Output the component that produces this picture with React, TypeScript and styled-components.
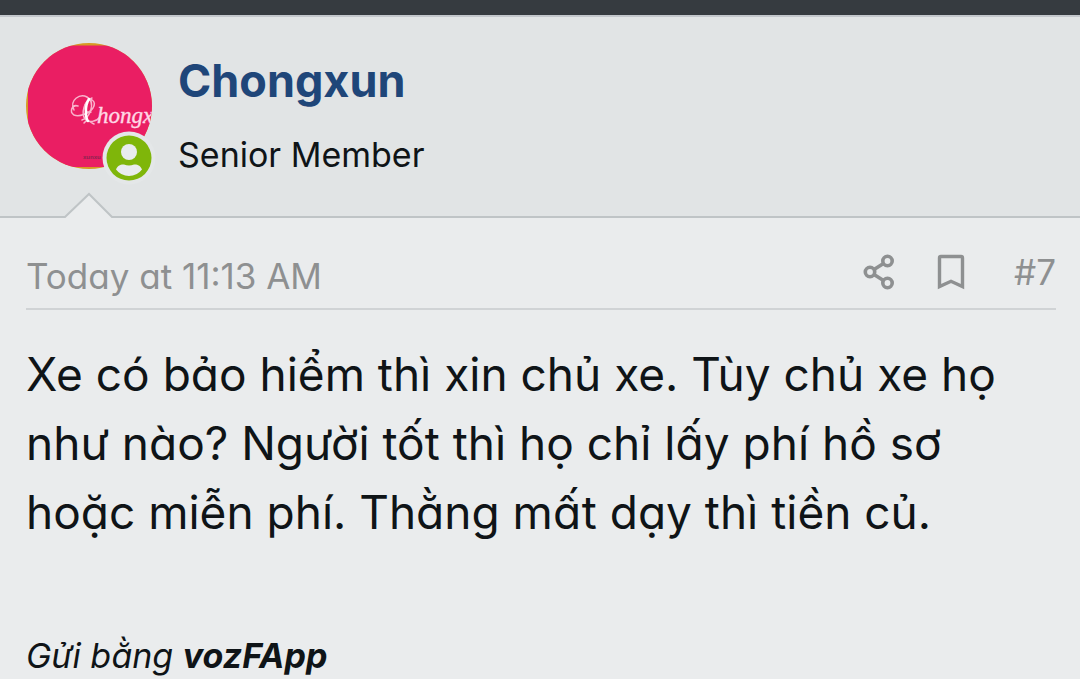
import React from 'react';
import styled, { createGlobalStyle } from 'styled-components';

const GlobalStyle = createGlobalStyle`
  * { box-sizing: border-box; }
  html { background: #eaeced; }
  body {
    margin: 0;
    background: #eaeced;
    color: #0f1417;
    font-family: Inter, 'Noto Sans', sans-serif;
    font-feature-settings: 'cv11' 1;
    overflow-x: hidden;
  }
`;

const TopBar = styled.div`
  height: 17px;
  background: #363b40;
  border-bottom: 2px solid #c3c7cc;
`;

const Author = styled.header`
  position: relative;
  display: flex;
  gap: 26px;
  height: 201px;
  padding: 26px;
  background: #e1e4e5;
  border-bottom: 2px solid #bfc4c6;
`;

const AvatarLink = styled.a`
  position: relative;
  flex: none;
  width: 126px;
  height: 126px;
`;

const AvatarArt = styled.svg`
  display: block;
  width: 126px;
  height: 126px;
`;

const OnlineBadge = styled.svg`
  position: absolute;
  right: -4px;
  bottom: -16px;
  width: 54px;
  height: 54px;
`;

const AuthorText = styled.div`
  display: flex;
  flex-direction: column;
  gap: 26px;
  padding-top: 10px;
`;

const Name = styled.a`
  color: #1f4679;
  font-size: 45px;
  font-weight: 700;
  line-height: 56px;
  text-decoration: none;
`;

const Rank = styled.span`
  font-size: 34px;
  line-height: 40px;
`;

const Notch = styled.svg`
  position: absolute;
  left: 62px;
  bottom: -3px;
  width: 54px;
  height: 27px;
`;

const Post = styled.article`
  padding: 34px 24px 0 26px;
`;

const Meta = styled.div`
  display: flex;
  align-items: flex-start;
  justify-content: space-between;
  height: 58px;
  border-bottom: 2px solid #d0d3d5;
  color: #8e9091;
  font-size: 35px;
  line-height: 48px;
`;

const Actions = styled.div`
  display: flex;
  align-items: center;
  gap: 42px;
  line-height: 40px;
`;

const IconButton = styled.button`
  display: flex;
  padding: 0;
  border: 0;
  background: none;
  color: inherit;
`;

const PlainLink = styled.a`
  color: inherit;
  text-decoration: none;
`;

const PostNumber = styled(PlainLink)`
  min-width: 49px;
  text-align: right;
`;

const Message = styled.p`
  margin: 30px 0 0;
  font-size: 46px;
  line-height: 69px;
  white-space: nowrap;
`;

const Signature = styled.p`
  margin: 83px 0 0;
  font-size: 34px;
  line-height: 52px;
  height: 48px;
  font-style: italic;
`;

function Avatar() {
  return (
    <AvatarLink href="#profile" aria-label="Chongxun">
      <AvatarArt viewBox="0 0 126 126">
        <defs>
          <clipPath id="disc"><circle cx="63" cy="63" r="63" /></clipPath>
        </defs>
        <g clipPath="url(#disc)">
          <rect width="126" height="126" fill="#d79a25" />
          <rect x="2" y="2.500" width="124" height="121.500" fill="#ea1e63" />
          <g fill="none" stroke="#f9b3cc" strokeWidth="1.5" strokeLinecap="round">
            <path d="M65 69C61 71 57 66 60 60C64 53 71 58 67 65C63 71 53 74 48 72C43 69 46 61 52 63M48 67C43 57 54 50 61 54C70 59 64 75 56 77" />
            <path d="M66 55C58 58 55 70 59 76C63 80 70 79 74 74M58 80C62 75 65 80 68 81" />
          </g>
          <path d="M63 56C59 62 59 74 62 78" fill="none" stroke="#fff" strokeWidth="2.5" strokeLinecap="round" />
          <text x="71" y="80" fill="#ffd7e5" stroke="#ffd7e5" strokeWidth="0.4" fontFamily="'Liberation Serif', serif" fontStyle="italic" fontSize="23">hongx</text>
          <text x="57" y="116" fill="#8d2450" fontFamily="'Liberation Sans', sans-serif" fontSize="6" fontWeight="700">xunxu</text>
        </g>
      </AvatarArt>
      <OnlineBadge viewBox="0 0 54 54" aria-hidden="true">
        <circle cx="27" cy="27" r="26.500" fill="#e4e7e8" />
        <circle cx="27" cy="27" r="22.500" fill="#7fb60a" />
        <circle cx="27" cy="21" r="8" fill="#e9ecee" />
        <path d="M14 38.500C15 35 19 33 22 33.500Q27 35.500 32 33.500C35 33 39 35 40 38.500Q35 45 27 45T14 38.500Z" fill="#e9ecee" />
      </OnlineBadge>
    </AvatarLink>
  );
}

export default function App() {
  return (
    <>
      <GlobalStyle />
      <TopBar />
      <Author>
        <Avatar />
        <AuthorText>
          <Name href="#profile">Chongxun</Name>
          <Rank>Senior Member</Rank>
        </AuthorText>
        <Notch viewBox="0 0 54 27" aria-hidden="true">
          <path d="M3 27V25L27 2L51 25V27Z" fill="#eaeced" />
          <path d="M1 25H3L27 2L50 25H53" fill="none" stroke="#bfc4c6" strokeWidth="2" />
        </Notch>
      </Author>
      <Post>
        <Meta>
          <PlainLink href="#post-7"><time>Today at 11:13 AM</time></PlainLink>
          <Actions>
            <IconButton type="button" aria-label="Share">
              <svg width="32" height="36" viewBox="0 0 32 36" fill="none" stroke="currentColor" strokeWidth="3.600">
                <circle cx="7" cy="18" r="4.700" />
                <circle cx="24.500" cy="7" r="4.700" />
                <circle cx="24.500" cy="29" r="4.700" />
                <path d="M11 15.500L20.500 9.500M11 20.500L20.500 26.500" />
              </svg>
            </IconButton>
            <IconButton type="button" aria-label="Bookmark">
              <svg width="28" height="36" viewBox="0 0 28 36" fill="none" stroke="currentColor" strokeWidth="3.400">
                <path d="M2.500 32.500V4Q2.500 2.500 4 2.500H24Q25.500 2.500 25.500 4V32.500L14 27.300Z" />
              </svg>
            </IconButton>
            <PostNumber href="#post-7">#7</PostNumber>
          </Actions>
        </Meta>
        <Message>
          Xe có bảo hiểm thì xin chủ xe. Tùy chủ xe họ<br />
          như nào? Người tốt thì họ chỉ lấy phí hồ sơ<br />
          hoặc miễn phí. Thằng mất dạy thì tiền củ.
        </Message>
        <Signature>Gửi bằng <b>vozFApp</b></Signature>
      </Post>
    </>
  );
}
